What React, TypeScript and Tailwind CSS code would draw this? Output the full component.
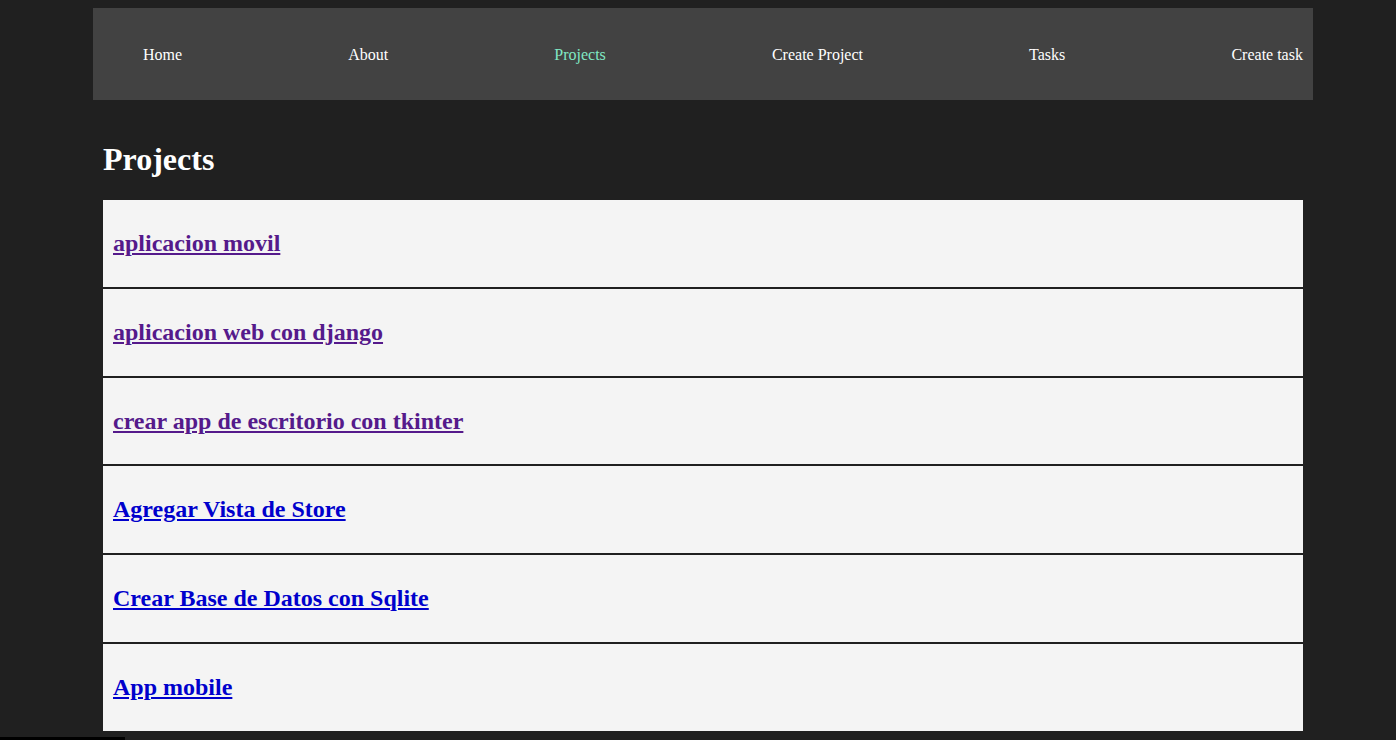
import React from "react";

const navItems = [
  { label: "Home", active: false },
  { label: "About", active: false },
  { label: "Projects", active: true },
  { label: "Create Project", active: false },
  { label: "Tasks", active: false },
  { label: "Create task", active: false },
];

const projects = [
  { name: "aplicacion movil", visited: true },
  { name: "aplicacion web con django", visited: true },
  { name: "crear app de escritorio con tkinter", visited: true },
  { name: "Agregar Vista de Store", visited: false },
  { name: "Crear Base de Datos con Sqlite", visited: false },
  { name: "App mobile", visited: false },
];

export default function App() {
  return (
    <div
      className="min-h-screen bg-[#202020] pt-[8px]"
      style={{ fontFamily: '"Liberation Serif", "Times New Roman", serif' }}
    >
      <div className="ml-[93px] w-[1220px]">
        <nav className="h-[92px] bg-[#424242] flex items-center">
          <ul className="flex w-full justify-between pl-[40px] pt-[2px]">
            {navItems.map((n) => (
              <li key={n.label} className="px-[10px]">
                <a
                  href="#"
                  className={
                    "text-[16px] leading-[18px] " +
                    (n.active ? "text-[#80e8c4]" : "text-white")
                  }
                >
                  {n.label}
                </a>
              </li>
            ))}
          </ul>
        </nav>
        <main className="px-[10px]">
          <h1 className="text-[32px] font-bold leading-[37px] text-white mt-[41px] mb-[22px]">
            Projects
          </h1>
          <ul>
            {projects.map((p) => (
              <li
                key={p.name}
                className="bg-[#f4f4f4] p-[10px] border-b-2 border-[#202020]"
              >
                <h2 className="text-[24px] font-bold leading-[27px] my-[19.92px]">
                  <a
                    href="#"
                    className={
                      "underline " +
                      (p.visited ? "text-[#551a8b]" : "text-[#0000cc]")
                    }
                  >
                    {p.name}
                  </a>
                </h2>
              </li>
            ))}
          </ul>
        </main>
      </div>
      <div className="fixed bottom-0 left-0 w-[125px] h-[3px] bg-black" />
    </div>
  );
}
